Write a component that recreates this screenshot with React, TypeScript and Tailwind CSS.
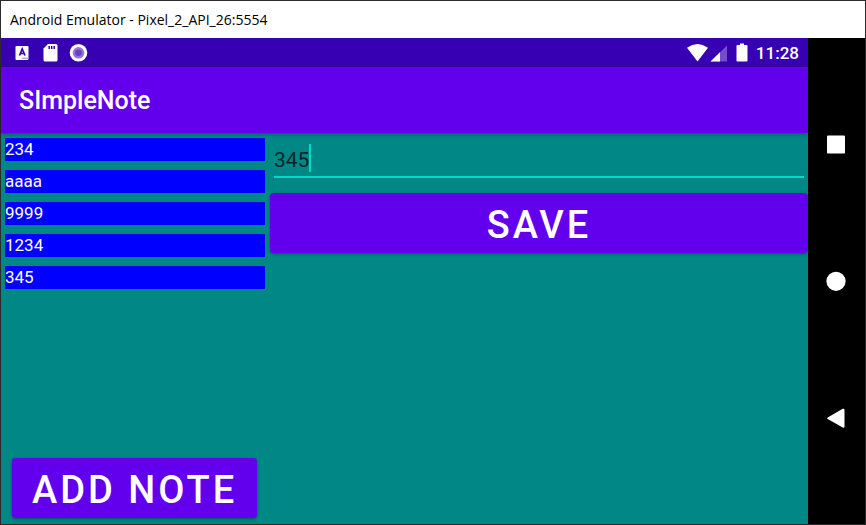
import { useState } from "react";

const notes = ["234", "aaaa", "9999", "1234", "345"];

function StatusBar() {
  return (
    <div className="flex h-[29px] items-center justify-between bg-[#3700b3] pl-3 pr-[9px] text-white">
      <div className="flex items-center gap-2">
        <svg className="size-5" viewBox="0 0 20 20" aria-hidden="true">
          <rect x="2.5" y="3" width="13" height="14" rx="1" fill="white" />
          <path d="M6.5 12.500l2.700-6.500L12 12.500M7.400 10.500h3.700" fill="none" stroke="#3700b3" strokeWidth="1.700" />
          <path d="M9.500 15.200h5" stroke="#3700b3" strokeWidth="1" strokeDasharray="1 1" />
        </svg>
        <svg className="size-5" viewBox="0 0 20 20" aria-hidden="true">
          <path d="M7 1h8q1.500 0 1.500 1.500v14.500q0 1.500-1.500 1.500H4q-1.500 0-1.500-1.500V5.500z" fill="white" />
          <path d="M8.200 3v3M10.700 3v3M13.200 3v3" stroke="#3700b3" strokeWidth="1.500" />
        </svg>
        <svg className="size-5" viewBox="0 0 20 20" aria-hidden="true">
          <circle cx="9.500" cy="9.800" r="8.800" fill="white" />
          <circle cx="9.500" cy="9.800" r="5.800" fill="#9575d9" />
          <circle cx="9.500" cy="9.800" r="3.300" fill="#6d3fc4" />
        </svg>
      </div>
      <div className="flex items-center">
        <svg className="h-5 w-[70px]" viewBox="0 0 70 20" aria-hidden="true">
          <path d="M1 4.700Q11.500-2.500 22 4.700L11.500 18.500z" fill="white" />
          <path d="M41 2.500V18.500H24.500z" fill="white" fillOpacity="0.300" />
          <path d="M34 9.300V18.500H24.500z" fill="white" />
          <path d="M54 0.500h4v1.500h2.500q1 0 1 1v14.500q0 1-1 1h-9q-1 0-1-1v-14.500q0-1 1-1H54z" fill="white" />
        </svg>
        <span className="text-[17px] leading-5 font-medium">11:28</span>
      </div>
    </div>
  );
}

function NavigationBar() {
  return (
    <nav className="flex w-[57px] shrink-0 flex-col justify-center bg-black pr-0.5 text-white">
      <button type="button" aria-label="Recent apps" className="flex h-[137px] items-center justify-center">
        <svg className="size-5" viewBox="0 0 20 20" fill="currentColor">
          <rect x="1" y="1.500" width="18" height="18" rx="1" />
        </svg>
      </button>
      <button type="button" aria-label="Home" className="flex h-[137px] items-center justify-center">
        <svg className="size-5" viewBox="0 0 20 20" fill="currentColor">
          <circle cx="10" cy="10.300" r="9.600" />
        </svg>
      </button>
      <button type="button" aria-label="Back" className="flex h-[137px] items-center justify-center">
        <svg className="size-5" viewBox="0 0 20 20" fill="currentColor">
          <path d="M1.700 9.400L16.700.8q1.800-.6 1.800 1.200v16.400q0 1.800-1.800 1.200L1.700 11q-1.200-.8 0-1.600z" />
        </svg>
      </button>
    </nav>
  );
}

export default function App() {
  const [text, setText] = useState("345");

  return (
    <div className="flex min-h-screen flex-col border border-[#2b2b2b] bg-white font-['Roboto',sans-serif]">
      <div className="flex h-[37px] items-center px-[9px] font-['Open_Sans',sans-serif] text-sm text-black">
        Android Emulator - Pixel_2_API_26:5554
      </div>
      <div className="flex grow">
        <div className="flex min-w-0 grow flex-col bg-[#018786]">
          <StatusBar />
          <header className="flex h-[66px] items-center bg-[#6200ee] px-[18px] pt-0.5 shadow-[0_1px_4px_rgba(0,0,0,0.4)]">
            <h1 className="text-[25px] leading-8 font-medium text-white">SImpleNote</h1>
          </header>
          <main className="flex grow">
            <section className="flex w-1/3 flex-col justify-between pt-[5px] pb-1.5">
              <ul className="mr-[5px] ml-1 flex flex-col gap-[9px] text-[17px] leading-[23px] text-white">
                {notes.map((note) => (
                  <li key={note} className="bg-[#0000ff]">
                    {note}
                  </li>
                ))}
              </ul>
              <button
                type="button"
                className="ml-[11px] h-[60px] self-start rounded bg-[#6200ee] px-5 pt-1 text-[38px] leading-none font-medium tracking-[3px] whitespace-nowrap text-white shadow-[0_1px_3px_rgba(0,0,0,0.4)]"
              >
                ADD NOTE
              </button>
            </section>
            <section className="flex w-2/3 flex-col pt-[7px]">
              <div className="relative mx-1">
                <input
                  type="text"
                  aria-label="Note text"
                  value={text}
                  onChange={(event) => setText(event.target.value)}
                  className="block h-[38px] w-full border-b-2 border-[#03dac5] pt-1 text-[21px] text-[#062625] caret-[#03dac5] outline-none"
                />
                <span className="absolute top-1 left-[35px] h-7 w-0.5 bg-[#03dac5]" />
              </div>
              <button
                type="button"
                className="mt-[15px] h-[60px] rounded bg-[#6200ee] pt-1 text-[38px] leading-none font-medium tracking-[3px] text-white shadow-[0_1px_3px_rgba(0,0,0,0.4)]"
              >
                SAVE
              </button>
            </section>
          </main>
        </div>
        <NavigationBar />
      </div>
    </div>
  );
}
